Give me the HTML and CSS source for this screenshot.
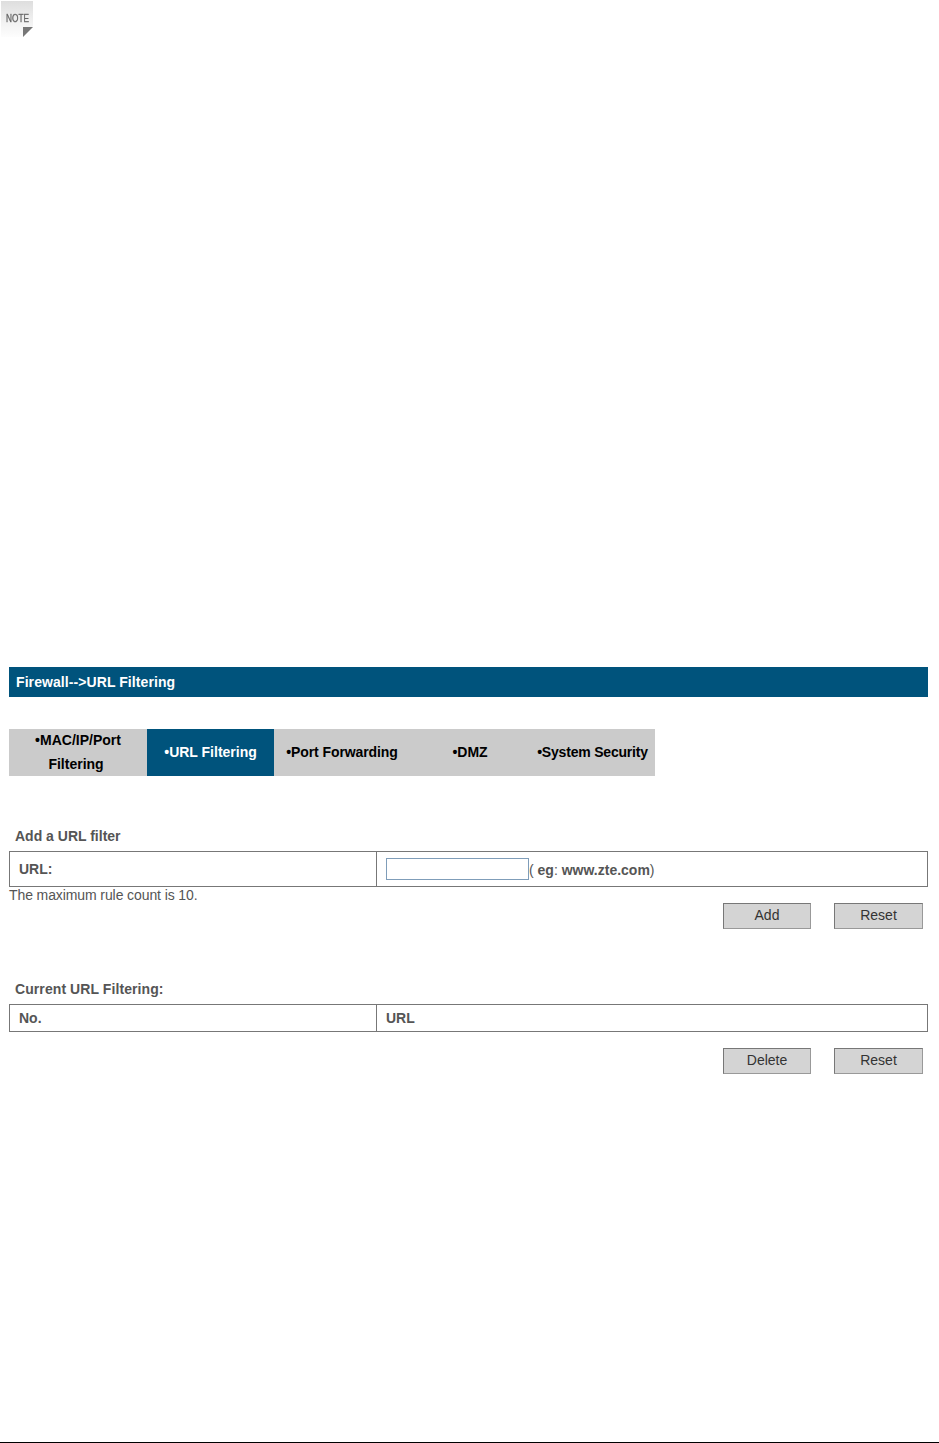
FILE: index.html
```html
<!DOCTYPE html>
<html lang="en">

<head>
    <meta charset="UTF-8">
    <meta name="viewport" content="width=device-width, initial-scale=1.0">
    <title>URL Filtering</title>
    <link rel="stylesheet" href="styles.css">
</head>

<body>
    <div class="page">
        <svg class="note" width="34" height="38" viewBox="0 0 34 38">
            <defs>
                <linearGradient id="noteBg" x1="0" y1="0" x2="0" y2="1">
                    <stop offset="0" stop-color="#dedede" />
                    <stop offset="0.6" stop-color="#f2f2f2" />
                    <stop offset="1" stop-color="#fdfdfd" />
                </linearGradient>
            </defs>
            <path d="M1 1H33V26L23 37H1Z" fill="url(#noteBg)" />
            <path d="M23 37V27H33Z" fill="#777" />
            <text x="6" y="21.5" textLength="23" lengthAdjust="spacingAndGlyphs" class="noteText">NOTE</text>
        </svg>

        <div class="panel">
            <div class="title">Firewall--&gt;URL Filtering</div>

            <div class="tabs">
                <div class="tab tabMac">•MAC/IP/Port<br>Filtering&nbsp;</div>
                <div class="tab tabUrl active">•URL Filtering</div>
                <div class="tab tabPort">•Port Forwarding</div>
                <div class="tab tabDmz">•DMZ</div>
                <div class="tab tabSys">•System Security</div>
            </div>

            <div class="caption captionAdd">Add a URL filter</div>
            <table class="grid gridAdd">
                <tr>
                    <td class="left">URL:</td>
                    <td><input type="text" class="urlInput"><span class="thin">(</span> eg<span class="thin">:</span> www.zte.com<span class="thin">)</span></td>
                </tr>
            </table>
            <p class="hint">The maximum rule count is 10.</p>
            <div class="buttons buttonsAdd">
                <button>Add</button>
                <button class="resetButton">Reset</button>
            </div>

            <div class="caption captionList">Current URL Filtering:</div>
            <table class="grid gridList">
                <tr>
                    <td class="left">No.</td>
                    <td>URL</td>
                </tr>
            </table>
            <div class="buttons buttonsList">
                <button>Delete</button>
                <button class="resetButton">Reset</button>
            </div>
        </div>

        <hr class="rule">
    </div>
</body>

</html>
```

FILE: styles.css
```css
body {
    margin: 0;
    background-color: #fff;
    font-family: "Liberation Sans", Arial, sans-serif;
    font-size: 14px;
}

.page {
    height: 1443px;
    display: flex;
    flex-direction: column;
    overflow: hidden;
}

.note {
    display: block;
    flex: none;
}

.noteText {
    font-family: "Liberation Sans", Arial, sans-serif;
    font-size: 10px;
    fill: #555;
    stroke: #777;
    stroke-width: 0.3px;
    filter: blur(0.3px);
}

.panel {
    margin: 629px 11px 0 9px;
}

.title {
    height: 30px;
    line-height: 30px;
    padding-left: 7px;
    background-color: #00537c;
    color: #fff;
    font-weight: bold;
    letter-spacing: 0.08px;
}

.tabs {
    display: flex;
    width: 646px;
    height: 47px;
    margin-top: 32px;
    background-color: #cbcbcb;
    color: #000;
    font-weight: bold;
}

.tab {
    display: flex;
    align-items: center;
    justify-content: center;
    box-sizing: border-box;
    padding-bottom: 2px;
    text-align: center;
    line-height: 24px;
}

.tabMac { width: 138px; }
.tabUrl { width: 127px; }
.tabPort { width: 136px; letter-spacing: -0.1px; }
.tabDmz { width: 120px; }
.tabSys { width: 125px; letter-spacing: -0.2px; }

.active {
    background-color: #00537c;
    color: #fff;
}

.caption {
    padding-left: 6px;
    color: #555;
    font-weight: bold;
    line-height: 16px;
}

.captionAdd { margin-top: 52px; }
.captionList { margin-top: 52px; letter-spacing: 0.08px; }

.grid {
    width: 919px;
    margin-top: 7px;
    border-collapse: collapse;
    table-layout: fixed;
    color: #555;
    font-weight: bold;
}

.grid td {
    border: 1px solid #777;
    padding: 0 9px;
}

.grid .left {
    width: 348px;
}

.gridAdd td { height: 34px; }
.gridList td { height: 26px; }

.urlInput {
    width: 143px;
    height: 22px;
    box-sizing: border-box;
    margin: 0;
    padding: 0;
    border: 1px solid #7f9db9;
    vertical-align: 1px;
}

.thin {
    font-weight: normal;
}

.hint {
    margin: 0;
    color: #555;
    line-height: 16px;
    letter-spacing: -0.1px;
}

.buttons {
    display: flex;
    justify-content: flex-end;
    gap: 23px;
    padding-right: 5px;
}

.buttonsAdd { margin-top: 0; }
.buttonsList { margin-top: 16px; }

.buttons button {
    width: 88px;
    height: 26px;
    padding: 0 0 2px;
    background-color: #d4d4d4;
    border: 1px solid;
    border-color: #777 #999 #999 #777;
    color: #333;
    font-family: inherit;
    font-size: 14px;
}

.buttons .resetButton {
    width: 89px;
}

.rule {
    width: 100%;
    margin: auto 0 0;
    border: 0;
    border-top: 1px solid #000;
}
```
